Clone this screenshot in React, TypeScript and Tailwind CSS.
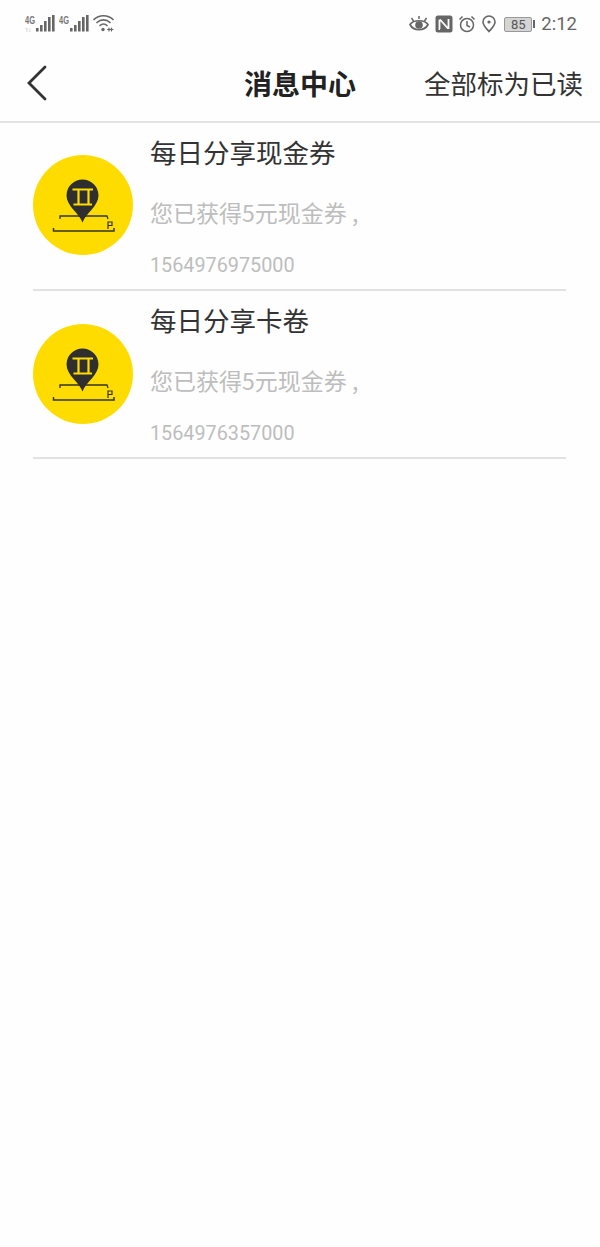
const CJK = { fontFamily: '"Noto Sans CJK SC", Roboto, sans-serif' };

function Signal({ small }: { small?: boolean }) {
  return (
    <svg width="30" height="20" viewBox="0 0 30 20" className="block">
      <text x="0" y="9.5" fontSize="10" fontWeight="700" fill="#777" style={{ fontFamily: '"Liberation Sans","Roboto",sans-serif' }} textLength="10" lengthAdjust="spacingAndGlyphs">4G</text>
      {small && <text x="0" y="18" fontSize="6" fill="#bbb" style={{ fontFamily: 'Roboto,sans-serif' }}>1↕</text>}
      <rect x="11" y="14" width="2.6" height="3.5" fill="#666" />
      <rect x="15" y="11" width="2.6" height="6.5" fill="#666" />
      <rect x="19" y="7" width="2.6" height="10.5" fill="#666" />
      <rect x="23" y="3" width="2.6" height="14.5" fill="#666" />
      <rect x="27" y="1" width="2.6" height="16.5" fill="#666" />
    </svg>
  );
}

function Wifi() {
  return (
    <svg width="21" height="20" viewBox="0 0 21 20" fill="none" stroke="#666" strokeWidth="1.7" strokeLinecap="round" className="block">
      <path d="M1 5.5C6 0.5 15 0.5 20 5.5" />
      <path d="M4 8.5C7.5 5 13.5 5 17 8.5" />
      <path d="M7 11.5C9 9.5 12 9.5 14 11.5" />
      <circle cx="10" cy="15.5" r="1.7" fill="#666" stroke="none" />
      <path d="M14.5 15.5h5.5M16 14v3M18.5 14v3" strokeWidth="1.2" />
    </svg>
  );
}

function StatusIcons() {
  return (
    <div className="flex items-center">
      <svg width="20" height="18" viewBox="0 0 20 18" fill="none" stroke="#666" strokeWidth="1.7" className="block">
        <path d="M1 9.5C4.5 4.5 15.5 4.5 19 9.5C15.5 16.5 4.5 16.5 1 9.5Z" />
        <circle cx="10" cy="10" r="3.8" fill="#666" stroke="none" />
        <path d="M2.5 3L4.5 6M17.5 3L15.5 6M10 1V4" strokeWidth="1.5" />
      </svg>
      <svg width="18" height="18" viewBox="0 0 18 18" className="ml-[6px] block">
        <rect x="0.5" y="0.5" width="17" height="17" rx="2.5" fill="#666" />
        <path d="M4.5 4.5V14L5 14M5 4.5L13 13.5M13.5 14V4" fill="none" stroke="#fff" strokeWidth="1.8" />
      </svg>
      <svg width="18" height="18" viewBox="0 0 18 18" fill="none" stroke="#666" strokeWidth="1.5" className="ml-[5px] block">
        <circle cx="9" cy="10" r="6.5" />
        <path d="M9 6V10.5L12 12M1.5 4.5L4.5 1.5M16.5 4.5L13.5 1.5" />
      </svg>
      <svg width="16" height="18" viewBox="0 0 16 18" fill="none" stroke="#666" strokeWidth="1.6" className="ml-[5px] block">
        <path d="M8 16.5C5 13 2 10.5 2 7A6 6 0 0 1 14 7C14 10.5 11 13 8 16.5Z" />
        <circle cx="8" cy="7" r="1.6" fill="#666" stroke="none" />
      </svg>
      <div className="ml-[7px] flex items-center">
        <div className="flex h-[15px] w-[28px] items-center justify-center rounded-[2px] border border-[#999] bg-[#d4d4d4] text-[13px] leading-none text-[#555]" style={{ fontFamily: 'Roboto, sans-serif' }}>
          85
        </div>
        <div className="ml-[1px] h-[8px] w-[2px] bg-[#666]" />
      </div>
      <span className="ml-[6px] text-[18.5px] leading-none text-[#666]" style={{ fontFamily: 'Roboto, sans-serif' }}>2:12</span>
    </div>
  );
}

function Logo() {
  return (
    <svg width="100" height="100" viewBox="0 0 100 100" className="block shrink-0">
      <circle cx="50" cy="50" r="50" fill="#ffdc00" />
      <path d="M27 64V61H74L75 64" fill="none" stroke="#333" strokeWidth="1.3" />
      <path d="M20.5 73V76H81V73" fill="none" stroke="#333" strokeWidth="1.5" />
      <path d="M75 74V67H79V70.5H75" fill="none" stroke="#333" strokeWidth="1.2" />
      <path d="M49.5 67.5C46 58 33.5 51 33.5 40.5A16 16 0 0 1 65.5 40.5C65.5 51 53 58 49.5 67.5Z" fill="#2f2f2f" />
      <path d="M39.5 34.5H60M45.5 35V49.5M55.5 35V49.5M40.5 49.5H59" fill="none" stroke="#ffdc00" strokeWidth="2.2" />
    </svg>
  );
}

function Row({ title, stamp, second }: { title: string; stamp: string; second?: boolean }) {
  return (
    <div className="ml-[33px] mr-[34px] flex h-[168px] items-start border-b-2 border-[#e2e2e2]">
      <div className={second ? 'mt-[33px]' : 'mt-[32px]'}>
        <Logo />
      </div>
      <div className="ml-[17px] flex h-full flex-col pt-[9px]">
        <div className="text-[26.5px] leading-[40px] text-[#333]" style={CJK}>{title}</div>
        <div className="mt-[23px] text-[23px] leading-[34px] text-[#bdbdbd]" style={CJK}>您已获得5元现金券 ,</div>
        <div className="mt-[23px] text-[19.8px] leading-[28px] text-[#bdbdbd]" style={{ fontFamily: 'Roboto, sans-serif' }}>{stamp}</div>
      </div>
    </div>
  );
}

export default function App() {
  return (
    <div className="h-[1247px] w-[600px] overflow-hidden bg-[#fefefe]" style={CJK}>
      <div className="flex h-[48px] items-center justify-between pl-[25px] pr-[23px]">
        <div className="flex items-center gap-[4px]">
          <Signal small />
          <Signal />
          <Wifi />
        </div>
        <StatusIcons />
      </div>
      <div className="relative flex h-[75px] items-center justify-between border-b-2 border-[#e4e4e4] pb-[3px] pl-[26px] pr-[17px]">
        <svg width="22" height="36" viewBox="0 0 22 36" fill="none" stroke="#333" strokeWidth="2.8" strokeLinecap="round" className="block">
          <path d="M19 2L3 18L19 34" />
        </svg>
        <div className="absolute left-[244px] text-[28px] font-bold leading-[40px] text-[#222]" style={CJK}>消息中心</div>
        <div className="text-[26.5px] leading-[40px] text-[#333]" style={CJK}>全部标为已读</div>
      </div>
      <Row title="每日分享现金券" stamp="1564976975000" />
      <Row title="每日分享卡卷" stamp="1564976357000" second />
    </div>
  );
}
